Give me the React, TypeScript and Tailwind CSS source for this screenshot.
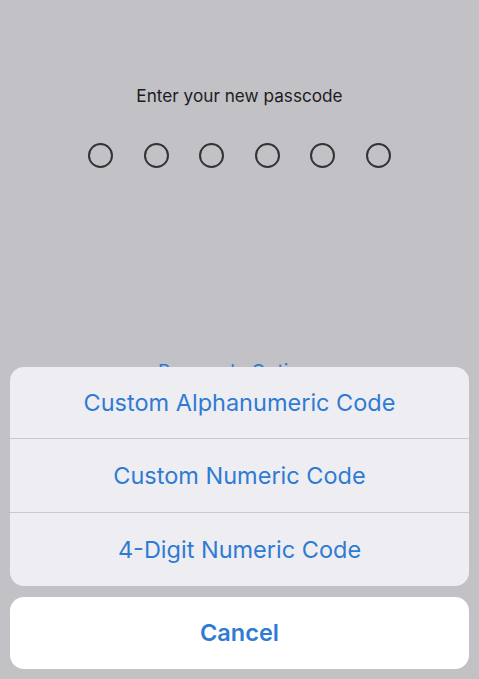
import React from "react";

export default function App() {
  const font = { fontFamily: "Inter, 'Noto Sans', 'Liberation Sans', sans-serif" };
  return (
    <div
      className="relative w-[479px] h-[679px] overflow-hidden bg-[#c2c1c6] flex flex-col items-center"
      style={font}
    >
      <div className="pt-[85px] text-[17.2px] leading-[22px] text-[#1c1c1e]">
        Enter your new passcode
      </div>
      <div className="mt-[36px] flex gap-[30.5px]">
        {[0, 1, 2, 3, 4, 5].map((i) => (
          <div
            key={i}
            className="w-[25px] h-[25px] rounded-full border-2 border-[#333336]"
          />
        ))}
      </div>
      <div className="mt-[193px] text-[19px] leading-[22px] text-[#2f7bd4]">
        Passcode Options
      </div>

      <div className="absolute left-[10px] right-[10px] bottom-[10px] flex flex-col gap-[11px]">
        <div className="rounded-[14px] bg-[#eeeef2] flex flex-col overflow-hidden">
          <div className="h-[72px] flex items-center justify-center text-[23.5px] text-[#2f7bd4] border-b border-[#c9c9cd]">
            Custom Alphanumeric Code
          </div>
          <div className="h-[74px] flex items-center justify-center text-[23.5px] text-[#2f7bd4] border-b border-[#c9c9cd]">
            Custom Numeric Code
          </div>
          <div className="h-[73px] flex items-center justify-center text-[23.5px] text-[#2f7bd4]">
            4-Digit Numeric Code
          </div>
        </div>
        <div className="h-[72px] rounded-[14px] bg-white flex items-center justify-center text-[23.5px] font-semibold text-[#2f7bd4]">
          Cancel
        </div>
      </div>
    </div>
  );
}
